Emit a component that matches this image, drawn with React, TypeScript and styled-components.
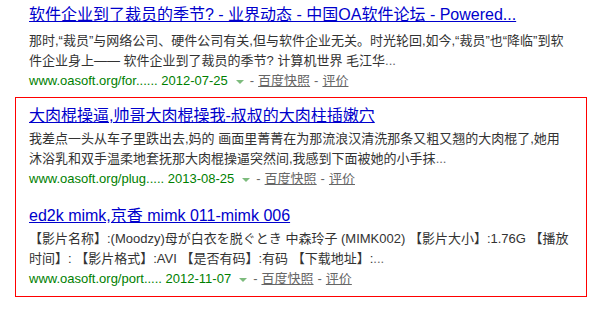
import React from "react";
import styled, { createGlobalStyle } from "styled-components";

const GlobalStyle = createGlobalStyle`
  html, body {
    margin: 0;
    padding: 0;
    background: #ffffff;
  }
  body {
    font-family: "Liberation Sans", Arial, "Noto Sans CJK SC", sans-serif;
  }
`;

const Page = styled.div`
  padding: 4px 0 0 15px;
`;

const PlainBlock = styled.div`
  padding-left: 14px;
`;

const HighlightBox = styled.div`
  margin-top: 6px;
  width: 544px;
  border: 1px solid #ff0000;
  padding: 7px 13px 7px 13px;
`;

const Result = styled.div<{ $top?: number }>`
  margin-top: ${(p) => p.$top ?? 0}px;
`;

const Title = styled.a<{ $gap: number }>`
  display: block;
  font-size: 16px;
  line-height: 22px;
  color: #0000cc;
  text-decoration: underline;
  text-underline-offset: 1px;
  white-space: nowrap;
  margin-bottom: ${(p) => p.$gap}px;
  cursor: pointer;
`;

const Abstract = styled.div`
  font-size: 13px;
  line-height: 20px;
  color: #333333;
  white-space: nowrap;
`;

const UrlLine = styled.div`
  font-size: 13px;
  line-height: 20px;
  color: #666666;
  white-space: nowrap;
  display: flex;
  align-items: center;
`;

const ShowUrl = styled.span`
  color: #008000;
`;

const Arrow = styled.span`
  display: inline-block;
  width: 0;
  height: 0;
  border-left: 4px solid transparent;
  border-right: 4px solid transparent;
  border-top: 4px solid #7dbb7d;
  margin: 1px 6px 0 8px;
`;

const Sep = styled.span<{ $left?: number }>`
  color: #666666;
  padding: 0 4px 0 ${(p) => p.$left ?? 4}px;
`;

const Link = styled.a`
  color: #666666;
  text-decoration: underline;
  text-underline-offset: 1px;
  cursor: pointer;
`;

const Dots = styled.span`
  color: #666666;
`;

type ItemProps = {
  title: string;
  lines: React.ReactNode[];
  url: string;
  date: string;
  gap: number;
  top?: number;
};

function Item({ title, lines, url, date, gap, top }: ItemProps) {
  return (
    <Result $top={top}>
      <Title $gap={gap}>{title}</Title>
      {lines.map((l, i) => (
        <Abstract key={i}>{l}</Abstract>
      ))}
      <UrlLine>
        <ShowUrl>
          {url}&nbsp;{date}
        </ShowUrl>
        <Arrow />
        <Sep $left={0}>-</Sep>
        <Link>百度快照</Link>
        <Sep>-</Sep>
        <Link>评价</Link>
      </UrlLine>
    </Result>
  );
}

export default function App() {
  return (
    <>
      <GlobalStyle />
      <Page>
        <PlainBlock>
          <Item
            title="软件企业到了裁员的季节? - 业界动态 - 中国OA软件论坛 - Powered..."
            gap={5}
            lines={[
              "那时,“裁员”与网络公司、硬件公司有关,但与软件企业无关。时光轮回,如今,“裁员”也“降临”到软",
              <>
                件企业身上—— 软件企业到了裁员的季节? 计算机世界 毛江华<Dots>...</Dots>
              </>,
            ]}
            url="www.oasoft.org/for......"
            date="2012-07-25"
          />
        </PlainBlock>
        <HighlightBox>
          <Item
            title="大肉棍操逼,帅哥大肉棍操我-叔叔的大肉柱插嫩穴"
            gap={2}
            lines={[
              "我差点一头从车子里跌出去,妈的 画面里菁菁在为那流浪汉清洗那条又粗又翘的大肉棍了,她用",
              <>
                沐浴乳和双手温柔地套抚那大肉棍操逼突然间,我感到下面被她的小手抹<Dots>...</Dots>
              </>,
            ]}
            url="www.oasoft.org/plug....."
            date="2013-08-25"
          />
          <Item
            top={16}
            title="ed2k mimk,京香 mimk 011-mimk 006"
            gap={2}
            lines={[
              "【影片名称】:(Moodzy)母が白衣を脱ぐとき 中森玲子 (MIMK002) 【影片大小】:1.76G 【播放",
              <>
                时间】: 【影片格式】:AVI 【是否有码】:有码 【下载地址】:<Dots>...</Dots>
              </>,
            ]}
            url="www.oasoft.org/port....."
            date="2012-11-07"
          />
        </HighlightBox>
      </Page>
    </>
  );
}
